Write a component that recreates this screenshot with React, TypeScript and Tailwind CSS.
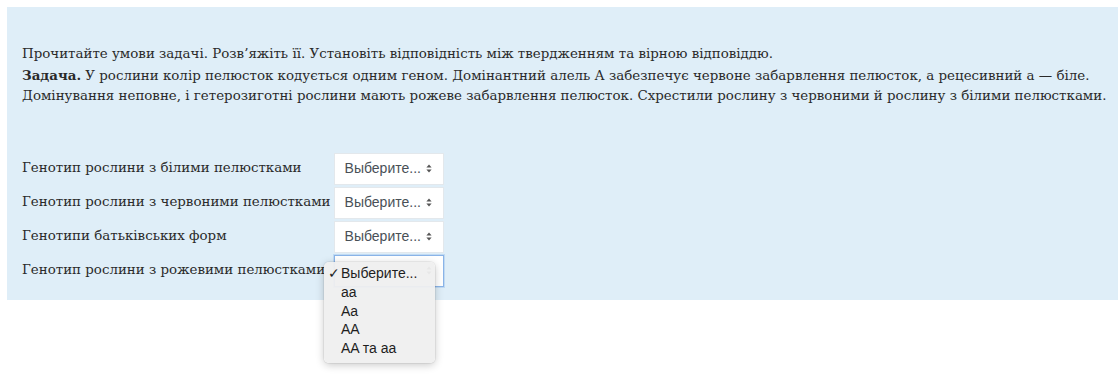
import React from "react";

const serif = { fontFamily: '"DejaVu Serif", "Liberation Serif", serif' };
const sans = { fontFamily: '"Liberation Sans", Arial, sans-serif' };

function Arrows() {
  return (
    <svg width="6" height="9" viewBox="0 0 6 9" className="shrink-0">
      <path d="M3 0.5 L5.6 3.6 H0.4 Z" fill="#555" />
      <path d="M3 8.5 L5.6 5.4 H0.4 Z" fill="#555" />
    </svg>
  );
}

function Select({ focused = false }: { focused?: boolean }) {
  return (
    <div
      className={
        "flex h-[32px] w-[110px] items-center justify-between bg-white pl-[10px] pr-[11px] text-[14px] text-[#495057] " +
        (focused
          ? "border border-[#8ab4e8] shadow-[0_0_0_1px_rgba(138,180,232,0.35)]"
          : "border border-[#e3e8ec]")
      }
      style={sans}
    >
      <span className={focused ? "invisible" : ""}>Выберите...</span>
      <Arrows />
    </div>
  );
}

const rows = [
  "Генотип рослини з білими пелюстками",
  "Генотип рослини з червоними пелюстками",
  "Генотипи батьківських форм",
  "Генотип рослини з рожевими пелюстками",
];

export default function App() {
  return (
    <div className="h-[392px] w-[1118px] bg-white pl-[7px] pt-[7px]">
      <div className="relative h-[293px] w-[1111px] bg-[#dfeef8] pl-[15px] pt-[37px] text-[#2a2a2a]">
        <div className="text-[13.4px] leading-[20.5px]" style={serif}>
          <p>Прочитайте умови задачі. Розв’яжіть її. Установіть відповідність між твердженням та вірною відповіддю.</p>
          <p>
            <b>Задача.</b> У рослини колір пелюсток кодується одним геном. Домінантний алель А забезпечує червоне
            забарвлення пелюсток, а рецесивний а — біле.
          </p>
          <p>
            Домінування неповне, і гетерозиготні рослини мають рожеве забарвлення пелюсток. Схрестили рослину з
            червоними й рослину з білими пелюстками.
          </p>
        </div>
        <div className="mt-[46px] grid grid-cols-[auto_auto] justify-start gap-x-[3px] gap-y-[2px]">
          {rows.map((r, i) => (
            <React.Fragment key={r}>
              <div className="pt-[5px] text-[13.4px] leading-[20px]" style={serif}>
                {r}
              </div>
              <Select focused={i === 3} />
            </React.Fragment>
          ))}
        </div>
        <div
          className="absolute left-[317px] top-[255px] w-[111px] rounded-[5px] bg-[#efefef]/95 pt-[2px] pb-[5px] text-[14px] leading-[18.8px] text-[#1e1e1e] shadow-[0_2px_8px_rgba(0,0,0,0.22)] ring-1 ring-black/5"
          style={sans}
        >
          <div className="flex items-center">
            <span className="w-[17px] pl-[4px] text-[14px]">✓</span>
            <span>Выберите...</span>
          </div>
          <div className="pl-[17px]">aa</div>
          <div className="pl-[17px]">Aa</div>
          <div className="pl-[17px]">AA</div>
          <div className="pl-[17px]">AA та aa</div>
        </div>
      </div>
    </div>
  );
}
